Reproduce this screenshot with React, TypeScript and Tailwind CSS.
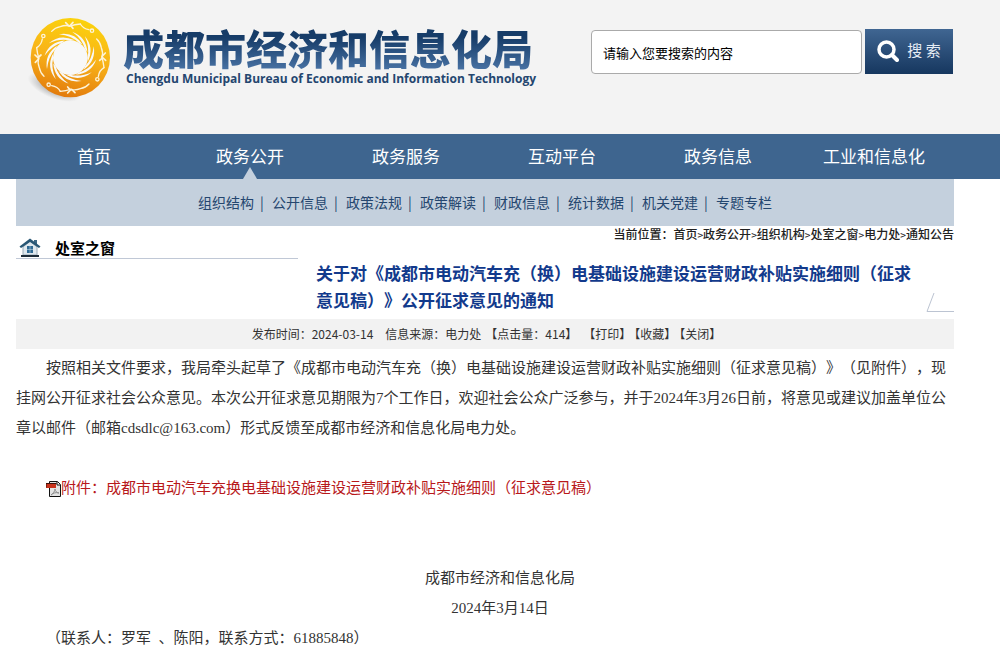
const navItems = ["首页", "政务公开", "政务服务", "互动平台", "政务信息", "工业和信息化"];

const subItems = [
  "组织结构",
  "公开信息",
  "政策法规",
  "政策解读",
  "财政信息",
  "统计数据",
  "机关党建",
  "专题专栏",
];

const crumbs = ["首页", "政务公开", "组织机构", "处室之窗", "电力处", "通知公告"];

const blades = [0, 30, 60, 90, 120, 150, 180, 210, 240, 270, 300, 330];
const birds = [0, 90, 180, 270];

function SunBirdLogo() {
  return (
    <svg viewBox="0 0 264 270" className="h-[90px] w-[88px] shrink-0" aria-hidden="true">
      <defs>
        <linearGradient id="sun" x1="0.6" y1="0" x2="0.4" y2="1">
          <stop offset="0" stopColor="#fbd30c" />
          <stop offset="0.5" stopColor="#f8b219" />
          <stop offset="1" stopColor="#e27a0c" />
        </linearGradient>
        <radialGradient id="shade">
          <stop offset="0" stopColor="#555" stopOpacity="0.7" />
          <stop offset="1" stopColor="#777" stopOpacity="0" />
        </radialGradient>
      </defs>
      <ellipse cx="84" cy="216" rx="84" ry="34" transform="rotate(22 84 216)" fill="url(#shade)" />
      <g transform="translate(133 128)">
        <circle r="119" fill="url(#sun)" />
        <circle r="52" fill="#f8f8f8" />
        {blades.map((deg) => (
          <path
            key={deg}
            transform={`rotate(${deg})`}
            d="M-34 -70 Q10 -78 36 -40 L26 -44 Q4 -66 -34 -70Z"
            fill="#f8f8f8"
          />
        ))}
        {birds.map((deg) => (
          <g key={deg} transform={`rotate(${deg})`} fill="none" stroke="#fdf3d8" strokeLinecap="round" strokeLinejoin="round">
            <circle cx="-81" cy="-65" r="5" strokeWidth="4" />
            <path d="M-84 -56 Q-87 -38 -101 -30" strokeWidth="4" />
            <path d="M-101 -30 Q-99 -12 -95 0 Q-99 16 -93 30 Q-90 46 -79 56" strokeWidth="4" />
            <path d="M-95 2 L-106 -8 M-95 4 L-105 14 M-95 -2 L-88 -8" strokeWidth="5" />
          </g>
        ))}
      </g>
    </svg>
  );
}

function SearchIcon() {
  return (
    <svg viewBox="0 0 22 22" className="size-[22px]" fill="none" stroke="#fff" aria-hidden="true">
      <circle cx="9.500" cy="9.500" r="7.500" strokeWidth="3.500" />
      <path d="M15 15l5 5" strokeWidth="4" strokeLinecap="round" />
    </svg>
  );
}

function HouseIcon() {
  return (
    <svg viewBox="0 0 22 20" className="h-5 w-[22px]" aria-hidden="true">
      <path d="M4 9 L11 3 L18 9 V17 H4Z" fill="#dfe8ee" stroke="#9aabb8" />
      <path d="M15 2h3v5l-3-2z" fill="#3c6784" />
      <path d="M11 0.5 L0.5 8.5 L2 10 L11 4 L20 10 L21.5 8.5Z" fill="#285674" />
      <path d="M8 8h6v7H8z" fill="#2f6a94" />
      <path d="M11 8v7M8 11.500h6" stroke="#bcd3e2" strokeWidth="0.6" />
      <path d="M2 18h18" stroke="#1d2c38" strokeWidth="2" />
    </svg>
  );
}

function PdfIcon() {
  return (
    <svg viewBox="0 0 15 16" className="inline-block h-4 w-[15px] align-[-4px]" aria-hidden="true">
      <path d="M3.500 .5h8l3 3v12h-11z" fill="#e4e4e4" stroke="#111" />
      <path d="M11 1v3h3.500" fill="#fff" stroke="#111" />
      <path d="M0 3h10v4H0z" fill="#c8321c" />
      <path d="M0 2.500h10.500M0 3v3.500" stroke="#3b1009" />
      <path d="M5 14c2-1 4-4 4-6 0 2 2 4 4 4-3-1-6 0-8 2" fill="none" stroke="#8d8d8d" />
    </svg>
  );
}

function SiteHeader() {
  return (
    <header className="flex h-[134px] items-start justify-between bg-[#f3f3f3] pr-[47px] pl-[26px]">
      <div className="flex items-start gap-2 pt-[15px]">
        <SunBirdLogo />
        <div className="pt-2 pl-px whitespace-nowrap">
          <h1 className="bg-linear-to-b from-[#163c68] from-30% to-[#4a74a6] bg-clip-text text-[41px] leading-[48px] font-black text-transparent">
            成都市经济和信息化局
          </h1>
          <p className="pl-[3px] font-['Open_Sans',sans-serif] text-xs leading-4 font-bold text-[#24466f]">
            Chengdu Municipal Bureau of Economic and Information Technology
          </p>
        </div>
      </div>
      <form className="flex gap-[3px] pt-[29px]">
        <input
          type="text"
          aria-label="搜索内容"
          placeholder="请输入您要搜索的内容"
          className="mt-px h-11 w-[271px] rounded-[4px] border border-[#aaa] bg-white px-[11px] text-[13px] text-black placeholder:text-black"
        />
        <button
          type="button"
          className="flex h-[45px] w-[88px] items-center justify-center gap-2 bg-linear-to-b from-[#406692] to-[#16375f] pb-0.5 text-[15px] text-[#e6edf5]"
        >
          <SearchIcon />
          搜 索
        </button>
      </form>
    </header>
  );
}

function Navigation() {
  return (
    <nav>
      <div className="bg-[#3e658f] pr-12 pl-4">
        <ul className="grid grid-cols-6">
          {navItems.map((item) => (
            <li key={item} className="relative">
              <a href="#" className="block pb-0.5 text-center text-[17px] leading-[43px] text-white">
                {item}
              </a>
              {item === "政务公开" && (
                <svg viewBox="0 0 14 12" className="absolute bottom-0 left-1/2 h-3 w-[14px] -translate-x-1/2">
                  <path d="M7 0L14 12H0Z" fill="#c4d0dd" />
                </svg>
              )}
            </li>
          ))}
        </ul>
      </div>
      <ul className="mr-[46px] ml-4 flex h-[47px] items-center justify-center bg-[#c4d0dd] pb-0.5 text-sm text-[#24466f]">
        {subItems.map((item, i) => (
          <li key={item} className="flex">
            <a href="#">{item}</a>
            {i < subItems.length - 1 && <span className="w-[18px] pr-0.5 text-center">|</span>}
          </li>
        ))}
      </ul>
    </nav>
  );
}

export default function App() {
  return (
    <div className="min-h-screen bg-white font-['Noto_Sans_CJK_SC',sans-serif] [text-spacing-trim:space-all]">
      <SiteHeader />
      <Navigation />

      <main className="mr-[46px] ml-4">
        <div className="flex items-start justify-between">
          <div className="flex h-[33px] w-[282px] items-end border-b border-[#c0c8d6] pl-[3px]">
            <HouseIcon />
            <h2 className="pl-[14px] text-[15px] leading-5 font-bold text-black">处室之窗</h2>
          </div>
          <p className="flex text-xs leading-4 font-medium text-[#222]">
            当前位置：
            {crumbs.map((crumb, i) => (
              <span key={crumb}>
                {i > 0 && <span className="text-[10px]">&gt;</span>}
                <a href="#">{crumb}</a>
              </span>
            ))}
          </p>
        </div>

        <div className="flex items-end pb-[6px]">
          <h3 className="ml-[300px] flex-1 text-[17px] leading-[27px] font-bold text-[#123a8c]">
            关于对《成都市电动汽车充（换）电基础设施建设运营财政补贴实施细则（征求意见稿）》公开征求意见的通知
          </h3>
          <svg viewBox="0 0 28 22" className="h-[22px] w-7 shrink-0" aria-hidden="true">
            <path d="M8 2L1 20.500H28" fill="none" stroke="#bcc4d2" />
          </svg>
        </div>

        <div className="flex h-[30px] items-center justify-center bg-[#f2f2f2] text-xs whitespace-nowrap text-[#333]">
          <span>发布时间：2024-03-14</span>
          <span className="ml-3">信息来源：电力处</span>
          <span className="ml-1">【点击量：414】</span>
          <div className="ml-1.5 flex">
            <button type="button" className="w-[45px]">【打印】</button>
            <button type="button" className="w-[45px]">【收藏】</button>
            <button type="button" className="w-[45px]">【关闭】</button>
          </div>
        </div>

        <article className="pt-1 font-['Liberation_Serif','Noto_Sans_CJK_SC',serif] text-[15px] leading-[30px] text-[#333]">
          <p className="indent-[2em]">
            按照相关文件要求，我局牵头起草了《成都市电动汽车充（换）电基础设施建设运营财政补贴实施细则（征求意见稿）》（见附件），现挂网公开征求社会公众意见。本次公开征求意见期限为7个工作日，欢迎社会公众广泛参与，并于2024年3月26日前，将意见或建议加盖单位公章以邮件（邮箱cdsdlc@163.com）形式反馈至成都市经济和信息化局电力处。
          </p>
          <p className="mt-[30px] indent-[2em]">
            <PdfIcon />
            <a href="#" className="text-[#b8181a]">
              附件：成都市电动汽车充换电基础设施建设运营财政补贴实施细则（征求意见稿）
            </a>
          </p>
          <p className="mt-[60px] text-center indent-[2em]">成都市经济和信息化局</p>
          <p className="text-center indent-[2em]">2024年3月14日</p>
          <p className="indent-[2em]">（联系人：罗军&nbsp; 、陈阳，联系方式：61885848）</p>
        </article>
      </main>
    </div>
  );
}
